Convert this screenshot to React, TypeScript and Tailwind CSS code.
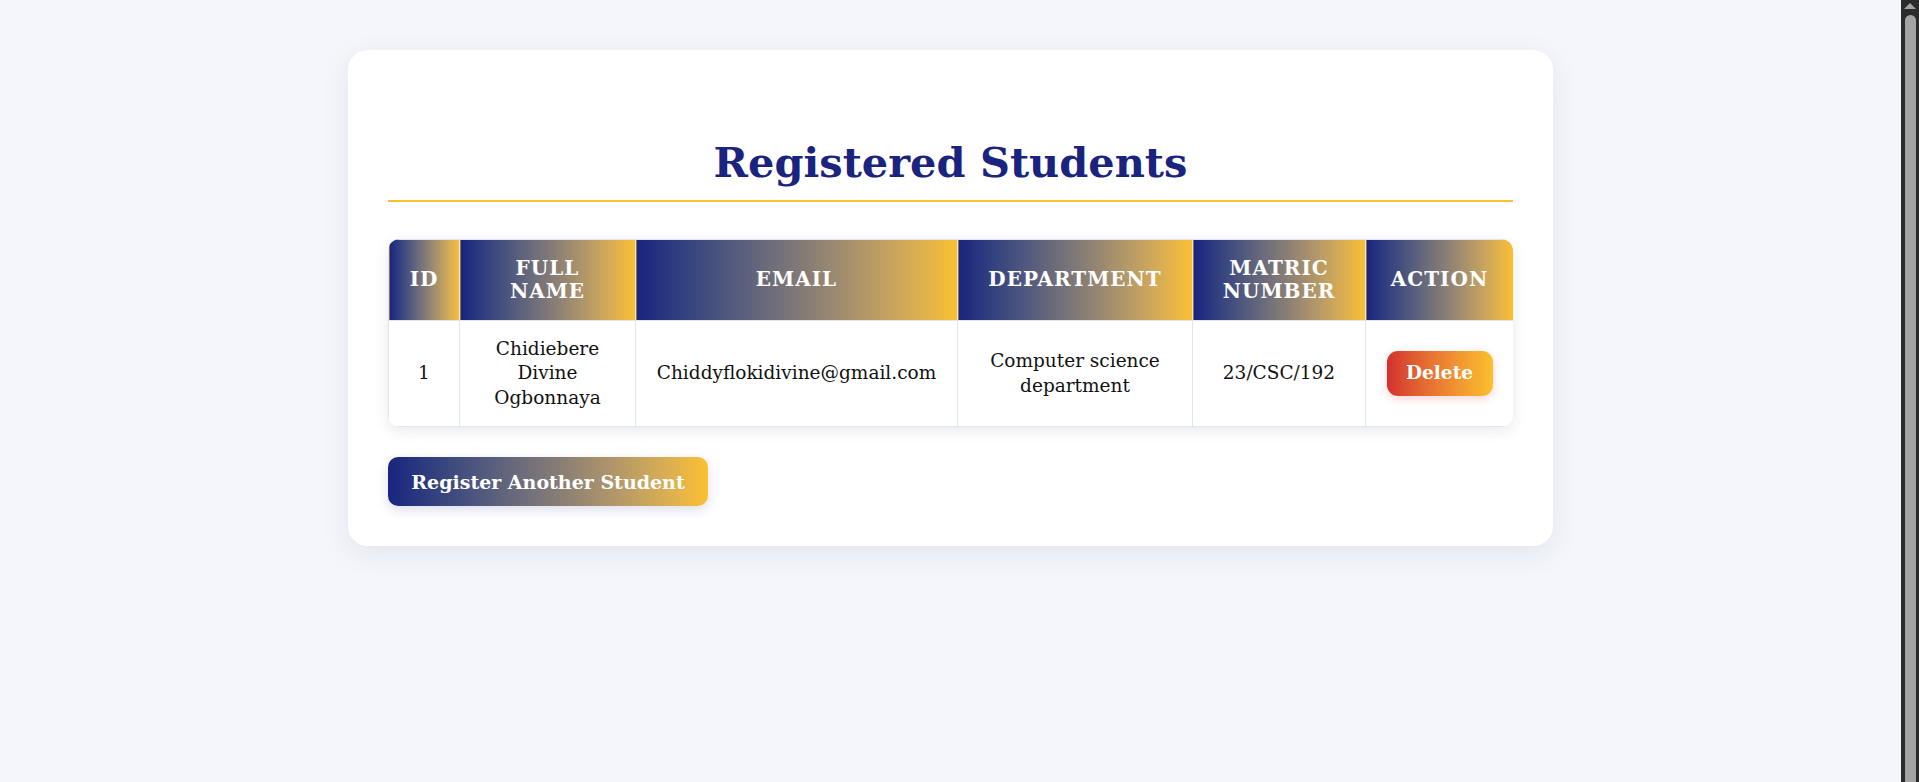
import React from 'react';

interface Student {
  id: number;
  fullName: string;
  email: string;
  department: string;
  matric: string;
}

const students: Student[] = [
  {
    id: 1,
    fullName: 'Chidiebere Divine Ogbonnaya',
    email: 'Chiddyflokidivine@gmail.com',
    department: 'Computer science department',
    matric: '23/CSC/192',
  },
];

const serif = "font-['DejaVu_Serif',Georgia,serif]";
const th = 'border border-[#e3e5ee] bg-gradient-to-r from-[#1a237e] to-[#fbc02d] py-[17px]';
const td = 'border border-[#e3e5ee] py-4';

export default function App() {
  return (
    <div className={`flex min-h-screen bg-[#f4f6fb] ${serif}`}>
      <main className="flex-1 pt-[50px]">
        <div className="mx-auto w-[1205px] rounded-[20px] bg-white px-[40px] pb-[40px] pt-[40px] shadow-[0_8px_30px_rgba(30,35,90,0.08)]">
          <h2 className="mt-[48px] border-b-2 border-[#fbc02d] pb-[12px] text-center text-[41.5px] font-bold leading-[1.2] text-[#1a237e]">
            Registered Students
          </h2>

          {/* Student table */}
          <div className="mt-[37px] overflow-hidden rounded-xl shadow-[0_4px_14px_rgba(30,35,90,0.1)]">
            <table className="w-full table-fixed border-collapse text-center">
              <thead>
                <tr className="text-[20px] font-bold uppercase leading-[23px] tracking-[1px] text-white">
                  <th className={`w-[71px] px-2 ${th}`}>ID</th>
                  <th className={`w-[176px] px-5 ${th}`}>Full Name</th>
                  <th className={`w-[322px] px-5 ${th}`}>Email</th>
                  <th className={`w-[235px] px-4 ${th}`}>Department</th>
                  <th className={`w-[173px] px-5 ${th}`}>Matric Number</th>
                  <th className={`w-[148px] px-3 ${th}`}>Action</th>
                </tr>
              </thead>
              <tbody>
                {students.map((s) => (
                  <tr key={s.id} className="text-[18.5px] leading-[24.5px] text-[#111]">
                    <td className={`px-3 ${td}`}>{s.id}</td>
                    <td className={`px-5 ${td}`}>{s.fullName}</td>
                    <td className={`px-3 ${td}`}>{s.email}</td>
                    <td className={`px-5 ${td}`}>{s.department}</td>
                    <td className={`px-3 ${td}`}>{s.matric}</td>
                    <td className={`px-3 ${td}`}>
                      <button className="h-[45px] w-[106px] rounded-[11px] bg-gradient-to-r from-[#d32f2f] to-[#fbc02d] text-[18.5px] font-bold text-white shadow-[0_3px_10px_rgba(211,47,47,0.2)]">
                        Delete
                      </button>
                    </td>
                  </tr>
                ))}
              </tbody>
            </table>
          </div>

          <button className="mt-[30px] h-[49px] w-[320px] rounded-[10px] bg-gradient-to-r from-[#1a237e] to-[#fbc02d] text-[19px] font-bold text-white shadow-[0_4px_12px_rgba(26,35,126,0.15)]">
            Register Another Student
          </button>
        </div>
      </main>

      {/* window scrollbar */}
      <aside className="flex w-[18px] flex-col items-center bg-[#2b2b2b] pt-[3px]">
        <div className="h-0 w-0 border-x-[6px] border-b-[6px] border-x-transparent border-b-[#a3a3a3]" />
        <div className="mt-[6px] w-[11px] flex-1 rounded-t-full bg-[#a3a3a3]" />
      </aside>
    </div>
  );
}
